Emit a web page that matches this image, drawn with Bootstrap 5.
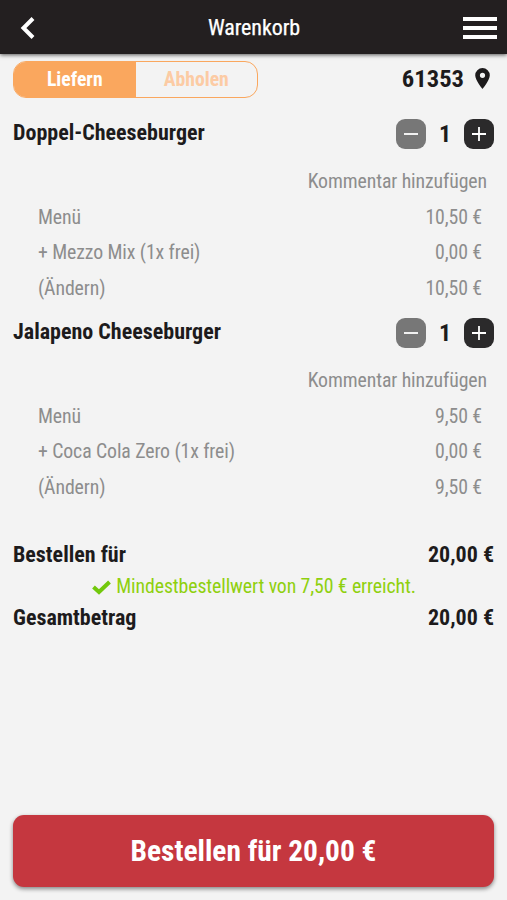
<!DOCTYPE html>
<html lang="de">
<head>
<meta charset="utf-8">
<meta name="viewport" content="width=device-width, initial-scale=1">
<title>Warenkorb</title>
<link href="https://cdn.jsdelivr.net/npm/bootstrap@5.3.0/dist/css/bootstrap.min.css" rel="stylesheet">
<style>
body{font-family:"Roboto Condensed",Roboto,"Liberation Sans",sans-serif;font-stretch:75%;background:#f3f3f3;color:#1d1b1c;height:900px;overflow:hidden;font-size:20px;line-height:24px}
.topbar{height:54px;background:#231f20;color:#fff;box-shadow:0 1px 4px rgba(0,0,0,.65);padding:1px 10px 0 20px}
.topbar h1{font-size:22px;line-height:26px;padding-right:9px;letter-spacing:-.1px;-webkit-text-stroke:.25px #fff}
.page{height:846px;padding:7px 13px 13px 13px}
.mode{width:245px;height:37px;border:1.5px solid #faa75e;border-radius:13px;font-size:19.7px}
.mode span{color:#fccba4}
.mode .chosen{background:#faa75e;color:#fff}
.zip{font-size:24.6px;gap:11px;padding-right:4px;height:35px}
.dish{height:199px}
.dish.first{height:203px}
.dish h2,.sum{font-size:22px;line-height:26px}
.dish h2{padding-top:2px}
.dish-head{height:31px}
.step{width:30px;height:30px;border-radius:9px;background:#2b2a2b}
.step.off{background:#777}
.qty{width:38px;font-size:24px}
.note,.opts,.okay{font-size:19.8px;letter-spacing:-.1px}
.note{color:#8d8d8d;padding-right:7px;line-height:26px}
.opts{color:#8d8d8d;padding:0 12px 0 25px;margin-top:11px}
.opts div{height:35.4px}
.okay{color:#8fd00e;height:37px}
.total-gap{margin-top:26px}
.buy{height:72px;background:#c5373f;border-radius:11px;color:#fff;font-size:29.4px;box-shadow:0 2px 4px rgba(0,0,0,.45)}
</style>
<script src="https://cdn.jsdelivr.net/npm/bootstrap@5.3.0/dist/js/bootstrap.bundle.min.js"></script>
</head>
<body class="m-0">
<header class="topbar d-flex align-items-center justify-content-between">
<svg width="34" height="24" viewBox="0 0 34 24"><path d="M13 2.500 3.500 12 13 21.500" fill="none" stroke="#fff" stroke-width="4"/></svg>
<h1 class="m-0 fw-normal">Warenkorb</h1>
<svg width="34" height="24" viewBox="0 0 34 24"><path d="M0 3h34M0 12h34M0 21h34" stroke="#fff" stroke-width="4"/></svg>
</header>
<main class="page d-flex flex-column">
<div class="d-flex justify-content-between">
<div class="mode d-flex overflow-hidden fw-bold">
<span class="chosen w-50 d-flex align-items-center justify-content-center">Liefern</span>
<span class="w-50 d-flex align-items-center justify-content-center">Abholen</span>
</div>
<div class="zip d-flex align-items-center fw-bold"><span>61353</span><svg width="15" height="21" viewBox="0 0 15 21"><path fill-rule="evenodd" d="M7.500 0A7.300 7.300 0 0 0 .2 7.300C.2 12.500 7.500 21 7.500 21s7.300-8.500 7.300-13.700A7.300 7.300 0 0 0 7.500 0Zm0 4.700a2.600 2.600 0 1 1 0 5.200 2.600 2.600 0 0 1 0-5.200Z" fill="#1d1b1c"/></svg></div>
</div>
<section class="dish first mt-3 pt-1">
<div class="dish-head d-flex justify-content-between">
<h2 class="m-0 fw-bold">Doppel-Cheeseburger</h2>
<div class="d-flex align-items-center"><span class="step off d-flex align-items-center justify-content-center"><svg width="14" height="14"><path d="M0 7h14" stroke="#fff" stroke-width="1.800"/></svg></span><span class="qty fw-bold text-center">1</span><span class="step d-flex align-items-center justify-content-center"><svg width="14" height="14"><path d="M0 7h14M7 0v14" stroke="#fff" stroke-width="1.800"/></svg></span></div>
</div>
<div class="note text-end mt-3 pt-1">Kommentar hinzufügen</div>
<div class="opts">
<div class="d-flex justify-content-between"><span>Menü</span><span>10,50 €</span></div>
<div class="d-flex justify-content-between"><span>+ Mezzo Mix (1x frei)</span><span>0,00 €</span></div>
<div class="d-flex justify-content-between"><span>(Ändern)</span><span>10,50 €</span></div>
</div>
</section>
<section class="dish">
<div class="dish-head d-flex justify-content-between">
<h2 class="m-0 fw-bold">Jalapeno Cheeseburger</h2>
<div class="d-flex align-items-center"><span class="step off d-flex align-items-center justify-content-center"><svg width="14" height="14"><path d="M0 7h14" stroke="#fff" stroke-width="1.800"/></svg></span><span class="qty fw-bold text-center">1</span><span class="step d-flex align-items-center justify-content-center"><svg width="14" height="14"><path d="M0 7h14M7 0v14" stroke="#fff" stroke-width="1.800"/></svg></span></div>
</div>
<div class="note text-end mt-3 pt-1">Kommentar hinzufügen</div>
<div class="opts">
<div class="d-flex justify-content-between"><span>Menü</span><span>9,50 €</span></div>
<div class="d-flex justify-content-between"><span>+ Coca Cola Zero (1x frei)</span><span>0,00 €</span></div>
<div class="d-flex justify-content-between"><span>(Ändern)</span><span>9,50 €</span></div>
</div>
</section>
<div class="sum total-gap fw-bold d-flex justify-content-between"><span>Bestellen für</span><span>20,00 €</span></div>
<div class="okay d-flex align-items-center justify-content-center"><svg class="me-1" width="21" height="16" viewBox="0 0 21 16"><path d="m2.500 8 5.500 5L18.500 3" fill="none" stroke="#72c80c" stroke-width="4"/></svg><span>Mindestbestellwert von 7,50 € erreicht.</span></div>
<div class="sum fw-bold d-flex justify-content-between"><span>Gesamtbetrag</span><span>20,00 €</span></div>
<div class="buy fw-bold d-flex align-items-center justify-content-center mt-auto">Bestellen für 20,00 €</div>
</main>
</body>
</html>
